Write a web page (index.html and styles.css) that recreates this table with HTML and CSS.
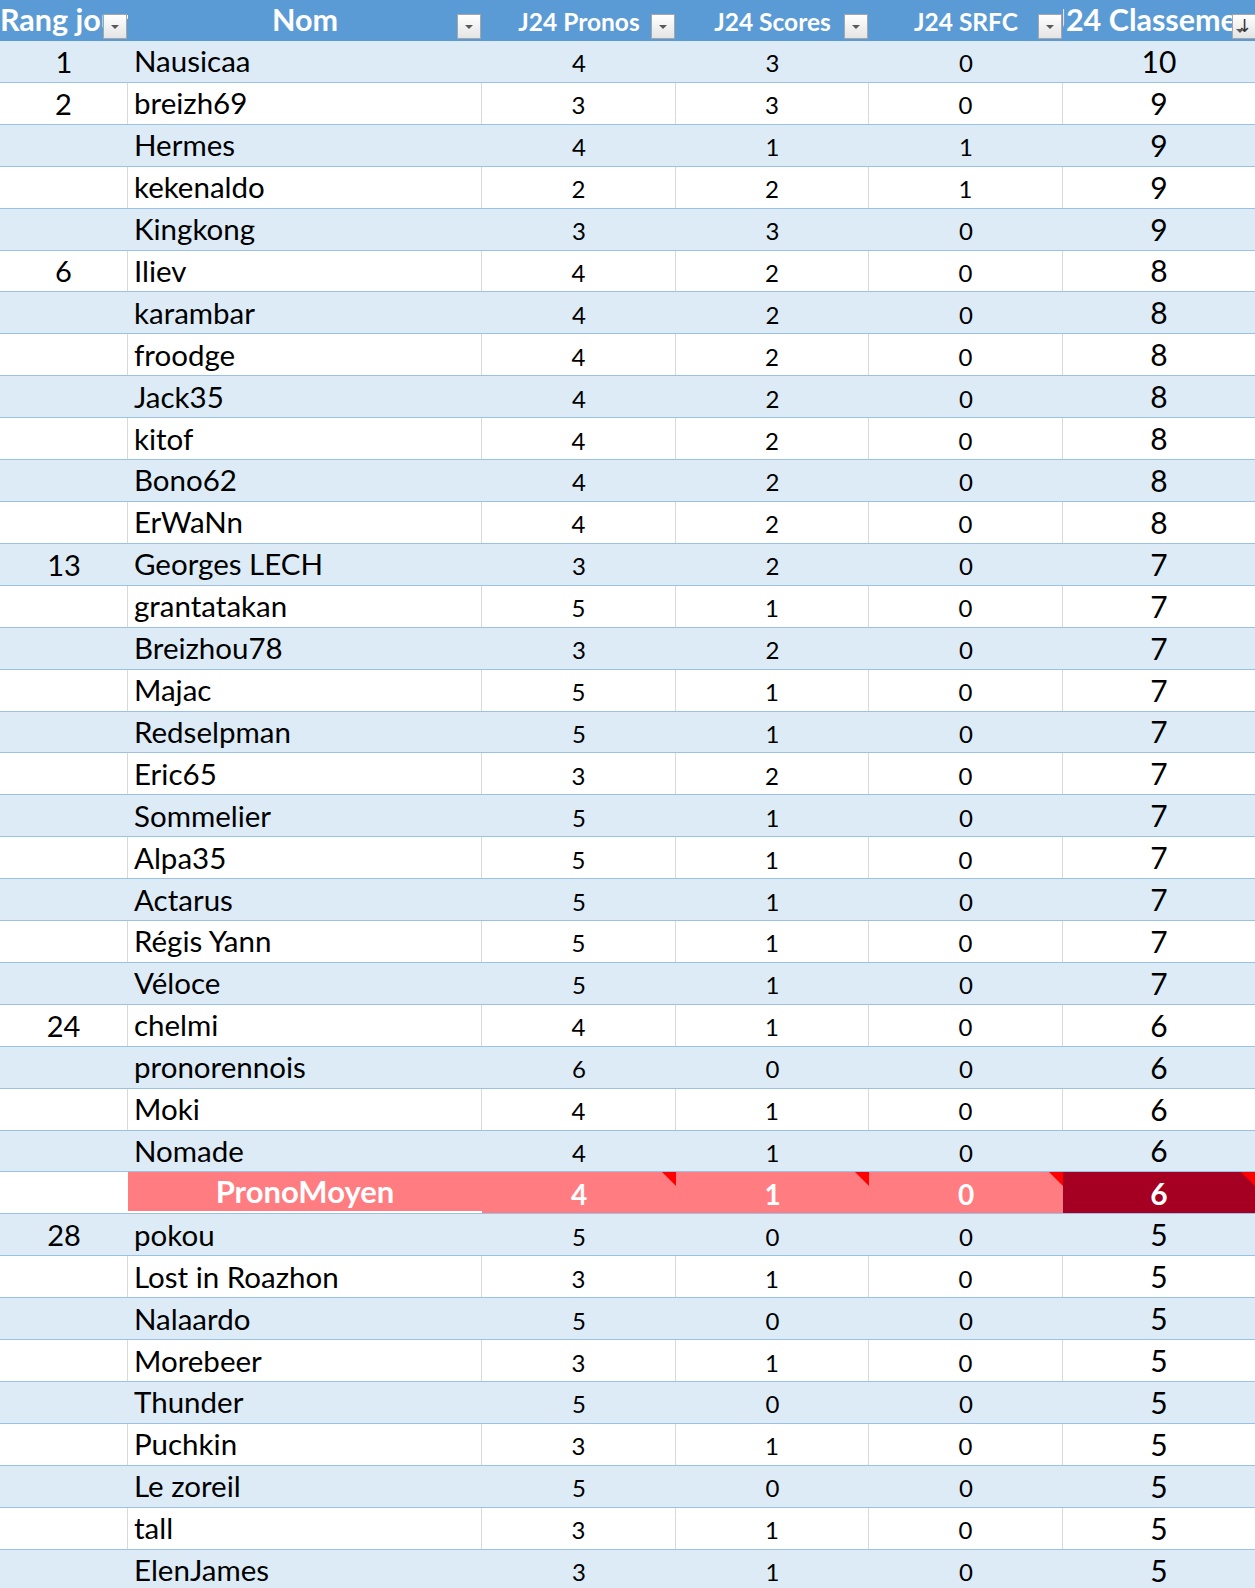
FILE: index.html
```html
<!DOCTYPE html>
<html lang="fr">
<head>
<meta charset="utf-8">
<title>Classement J24</title>
<link rel="stylesheet" href="styles.css">
</head>
<body>
<div class="sheet">
  <div class="row head">
    <div class="h h-left big"><span>Rang journée</span><i class="dd"></i></div>
    <div class="h big"><span>Nom</span><i class="dd"></i></div>
    <div class="h small"><span>J24 Pronos</span><i class="dd"></i></div>
    <div class="h small"><span>J24 Scores</span><i class="dd"></i></div>
    <div class="h small"><span>J24 SRFC</span><i class="dd"></i></div>
    <div class="h big last"><span>J24 Classement</span><i class="dd sort"><b>↓</b></i></div>
  </div>
  <div class="row band"><div class="c rk">1</div><div class="c nm">Nausicaa</div><div class="c n">4</div><div class="c n">3</div><div class="c n">0</div><div class="c tot">10</div></div>
  <div class="row"><div class="c rk">2</div><div class="c nm">breizh69</div><div class="c n">3</div><div class="c n">3</div><div class="c n">0</div><div class="c tot">9</div></div>
  <div class="row band"><div class="c rk"></div><div class="c nm">Hermes</div><div class="c n">4</div><div class="c n">1</div><div class="c n">1</div><div class="c tot">9</div></div>
  <div class="row"><div class="c rk"></div><div class="c nm">kekenaldo</div><div class="c n">2</div><div class="c n">2</div><div class="c n">1</div><div class="c tot">9</div></div>
  <div class="row band"><div class="c rk"></div><div class="c nm">Kingkong</div><div class="c n">3</div><div class="c n">3</div><div class="c n">0</div><div class="c tot">9</div></div>
  <div class="row"><div class="c rk">6</div><div class="c nm">Iliev</div><div class="c n">4</div><div class="c n">2</div><div class="c n">0</div><div class="c tot">8</div></div>
  <div class="row band"><div class="c rk"></div><div class="c nm">karambar</div><div class="c n">4</div><div class="c n">2</div><div class="c n">0</div><div class="c tot">8</div></div>
  <div class="row"><div class="c rk"></div><div class="c nm">froodge</div><div class="c n">4</div><div class="c n">2</div><div class="c n">0</div><div class="c tot">8</div></div>
  <div class="row band"><div class="c rk"></div><div class="c nm">Jack35</div><div class="c n">4</div><div class="c n">2</div><div class="c n">0</div><div class="c tot">8</div></div>
  <div class="row"><div class="c rk"></div><div class="c nm">kitof</div><div class="c n">4</div><div class="c n">2</div><div class="c n">0</div><div class="c tot">8</div></div>
  <div class="row band"><div class="c rk"></div><div class="c nm">Bono62</div><div class="c n">4</div><div class="c n">2</div><div class="c n">0</div><div class="c tot">8</div></div>
  <div class="row"><div class="c rk"></div><div class="c nm">ErWaNn</div><div class="c n">4</div><div class="c n">2</div><div class="c n">0</div><div class="c tot">8</div></div>
  <div class="row band"><div class="c rk">13</div><div class="c nm">Georges LECH</div><div class="c n">3</div><div class="c n">2</div><div class="c n">0</div><div class="c tot">7</div></div>
  <div class="row"><div class="c rk"></div><div class="c nm">grantatakan</div><div class="c n">5</div><div class="c n">1</div><div class="c n">0</div><div class="c tot">7</div></div>
  <div class="row band"><div class="c rk"></div><div class="c nm">Breizhou78</div><div class="c n">3</div><div class="c n">2</div><div class="c n">0</div><div class="c tot">7</div></div>
  <div class="row"><div class="c rk"></div><div class="c nm">Majac</div><div class="c n">5</div><div class="c n">1</div><div class="c n">0</div><div class="c tot">7</div></div>
  <div class="row band"><div class="c rk"></div><div class="c nm">Redselpman</div><div class="c n">5</div><div class="c n">1</div><div class="c n">0</div><div class="c tot">7</div></div>
  <div class="row"><div class="c rk"></div><div class="c nm">Eric65</div><div class="c n">3</div><div class="c n">2</div><div class="c n">0</div><div class="c tot">7</div></div>
  <div class="row band"><div class="c rk"></div><div class="c nm">Sommelier</div><div class="c n">5</div><div class="c n">1</div><div class="c n">0</div><div class="c tot">7</div></div>
  <div class="row"><div class="c rk"></div><div class="c nm">Alpa35</div><div class="c n">5</div><div class="c n">1</div><div class="c n">0</div><div class="c tot">7</div></div>
  <div class="row band"><div class="c rk"></div><div class="c nm">Actarus</div><div class="c n">5</div><div class="c n">1</div><div class="c n">0</div><div class="c tot">7</div></div>
  <div class="row"><div class="c rk"></div><div class="c nm">Régis Yann</div><div class="c n">5</div><div class="c n">1</div><div class="c n">0</div><div class="c tot">7</div></div>
  <div class="row band"><div class="c rk"></div><div class="c nm">Véloce</div><div class="c n">5</div><div class="c n">1</div><div class="c n">0</div><div class="c tot">7</div></div>
  <div class="row"><div class="c rk">24</div><div class="c nm">chelmi</div><div class="c n">4</div><div class="c n">1</div><div class="c n">0</div><div class="c tot">6</div></div>
  <div class="row band"><div class="c rk"></div><div class="c nm">pronorennois</div><div class="c n">6</div><div class="c n">0</div><div class="c n">0</div><div class="c tot">6</div></div>
  <div class="row"><div class="c rk"></div><div class="c nm">Moki</div><div class="c n">4</div><div class="c n">1</div><div class="c n">0</div><div class="c tot">6</div></div>
  <div class="row band"><div class="c rk"></div><div class="c nm">Nomade</div><div class="c n">4</div><div class="c n">1</div><div class="c n">0</div><div class="c tot">6</div></div>
  <div class="row avg"><div class="c rk"></div><div class="c nm">PronoMoyen</div><div class="c n note">4</div><div class="c n note">1</div><div class="c n note">0</div><div class="c tot note">6</div></div>
  <div class="row band"><div class="c rk">28</div><div class="c nm">pokou</div><div class="c n">5</div><div class="c n">0</div><div class="c n">0</div><div class="c tot">5</div></div>
  <div class="row"><div class="c rk"></div><div class="c nm">Lost in Roazhon</div><div class="c n">3</div><div class="c n">1</div><div class="c n">0</div><div class="c tot">5</div></div>
  <div class="row band"><div class="c rk"></div><div class="c nm">Nalaardo</div><div class="c n">5</div><div class="c n">0</div><div class="c n">0</div><div class="c tot">5</div></div>
  <div class="row"><div class="c rk"></div><div class="c nm">Morebeer</div><div class="c n">3</div><div class="c n">1</div><div class="c n">0</div><div class="c tot">5</div></div>
  <div class="row band"><div class="c rk"></div><div class="c nm">Thunder</div><div class="c n">5</div><div class="c n">0</div><div class="c n">0</div><div class="c tot">5</div></div>
  <div class="row"><div class="c rk"></div><div class="c nm">Puchkin</div><div class="c n">3</div><div class="c n">1</div><div class="c n">0</div><div class="c tot">5</div></div>
  <div class="row band"><div class="c rk"></div><div class="c nm">Le zoreil</div><div class="c n">5</div><div class="c n">0</div><div class="c n">0</div><div class="c tot">5</div></div>
  <div class="row"><div class="c rk"></div><div class="c nm">tall</div><div class="c n">3</div><div class="c n">1</div><div class="c n">0</div><div class="c tot">5</div></div>
  <div class="row band"><div class="c rk"></div><div class="c nm">ElenJames</div><div class="c n">3</div><div class="c n">1</div><div class="c n">0</div><div class="c tot">5</div></div>
</div>
</body>
</html>
```

FILE: styles.css
```css
html, body {
  margin: 0;
  padding: 0;
  overflow: hidden;
  background: #fff;
}

body {
  font-family: Lato, "Open Sans", "Liberation Sans", sans-serif;
  color: #000;
}

.sheet {
  width: 1255px;
}

.row {
  display: grid;
  grid-template-columns: 128px 354px 194px 193px 194px 192px;
  height: 41.92px;
  box-sizing: border-box;
  border-bottom: 1px solid #9bc2e6;
}

.row.band {
  background: #ddebf7;
}

/* header */
.row.head {
  height: 41px;
  background: #5b9bd5;
  border-bottom: 0;
  color: #fff;
  font-weight: 700;
}

.h {
  position: relative;
  overflow: hidden;
  display: flex;
  justify-content: center;
  align-items: flex-end;
  padding-bottom: 7px;
  box-sizing: border-box;
  line-height: 1;
  white-space: nowrap;
}

.h span {
  flex: none;
}

.h.h-left {
  justify-content: flex-start;
}

.h.big {
  font-size: 30.5px;
}

.h.small {
  font-size: 24.5px;
}

.dd {
  position: absolute;
  right: 1px;
  top: 14px;
  width: 24px;
  height: 25px;
  box-sizing: border-box;
  border: 1px solid #a6a6a6;
  background: linear-gradient(#ffffff, #e4e4e4);
}

.dd::after {
  content: "";
  position: absolute;
  left: 7px;
  top: 10px;
  border-left: 4px solid transparent;
  border-right: 4px solid transparent;
  border-top: 4px solid #595959;
}

.h.last .dd {
  right: -1px;
}

.dd.sort::after {
  left: 3px;
  top: 14px;
}

.dd.sort b {
  position: absolute;
  right: 3px;
  top: 2px;
  font-family: "DejaVu Sans", sans-serif;
  font-size: 18px;
  font-weight: 400;
  color: #333;
  line-height: 1;
}

/* body cells */
.c {
  display: flex;
  align-items: flex-end;
  justify-content: center;
  padding-bottom: 6px;
  box-sizing: border-box;
  line-height: 1;
  white-space: nowrap;
  overflow: hidden;
  position: relative;
}

.row:not(.band):not(.avg) .c:not(:last-child) {
  border-right: 1px solid #d9d9d9;
}

.c.rk {
  font-size: 29px;
}

.c.nm {
  font-size: 29.5px;
  justify-content: flex-start;
  padding-left: 6px;
}

.c.n {
  font-size: 24px;
  padding-bottom: 6.5px;
}

.c.tot {
  font-size: 30px;
}

/* average row */
.row.avg .c {
  color: #fff;
  font-weight: 700;
}

.row.avg .c.nm {
  background: #ff7c80;
  justify-content: center;
  padding-left: 0;
  padding-bottom: 4px;
  font-size: 31px;
  border-bottom: 2px solid #fff;
}

.row.avg .c.n {
  background: #ff7c80;
  font-size: 28px;
  padding-bottom: 5px;
}

.row.avg .c.tot {
  background: #a50021;
  padding-bottom: 5px;
}

.note::after {
  content: "";
  position: absolute;
  top: 0;
  right: 0;
  border-left: 14px solid transparent;
  border-top: 14px solid #ff0000;
}
```
